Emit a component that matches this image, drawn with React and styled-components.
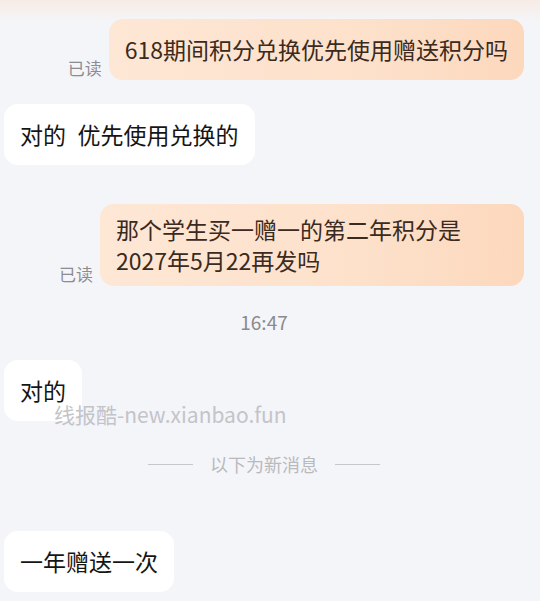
import React from "react";
import styled, { createGlobalStyle } from "styled-components";

const GlobalStyle = createGlobalStyle`
  html, body {
    margin: 0;
    padding: 0;
    background: #f4f5f9;
  }
  body {
    font-family: "Noto Sans CJK SC", "Noto Sans", sans-serif;
  }
`;

const messages = [
  { id: 1, mine: true, read: true, gap: 0, text: "618期间积分兑换优先使用赠送积分吗" },
  { id: 2, mine: false, gap: 24, text: "对的\u2002优先使用兑换的" },
  { id: 3, mine: true, read: true, gap: 39, text: "那个学生买一赠一的第二年积分是2027年5月22再发吗" },
  { id: 4, time: "16:47", gap: 24 },
  { id: 5, mine: false, gap: 26, text: "对的" },
  { id: 6, divider: "以下为新消息", gap: 31 },
  { id: 7, mine: false, gap: 55, text: "一年赠送一次" },
];

const App = () => {
  return (
    <Page>
      <GlobalStyle />
      {messages.map((m) => {
        if (m.time) {
          return (
            <Time key={m.id} $gap={m.gap}>
              {m.time}
            </Time>
          );
        }
        if (m.divider) {
          return (
            <Divider key={m.id} $gap={m.gap}>
              <Line />
              <span>{m.divider}</span>
              <Line />
            </Divider>
          );
        }
        return (
          <Row key={m.id} $mine={m.mine} $gap={m.gap}>
            {m.read && <ReadMark>已读</ReadMark>}
            <Bubble $mine={m.mine}>{m.text}</Bubble>
          </Row>
        );
      })}
      <Watermark>线报酷-new.xianbao.fun</Watermark>
    </Page>
  );
};

export default App;

const Page = styled.div`
  position: relative;
  width: 540px;
  height: 601px;
  overflow: hidden;
  box-sizing: border-box;
  padding: 19px 16px 0 4px;
  display: flex;
  flex-direction: column;
  background: linear-gradient(
    180deg,
    rgba(250, 228, 212, 0.55) 0px,
    rgba(244, 245, 249, 0) 22px
  );
`;

const Row = styled.div`
  display: flex;
  align-items: flex-end;
  justify-content: ${(props) => (props.$mine ? "flex-end" : "flex-start")};
  gap: 7px;
  margin-top: ${(props) => props.$gap}px;
`;

const ReadMark = styled.span`
  font-size: 17px;
  line-height: 24px;
  color: #8d8d91;
  margin-bottom: 0;
  flex-shrink: 0;
`;

const Bubble = styled.div`
  box-sizing: border-box;
  max-width: 424px;
  min-height: 61px;
  padding: 10px 16px;
  display: flex;
  align-items: center;
  border-radius: 14px;
  font-size: 23px;
  line-height: 31px;
  color: ${(props) => (props.$mine ? "#3a2a20" : "#151515")};
  background: ${(props) =>
    props.$mine
      ? "linear-gradient(90deg, #fde7d5 0%, #fde1cb 60%, #fcd8bd 100%)"
      : "#ffffff"};
`;

const Time = styled.div`
  margin-top: ${(props) => props.$gap}px;
  text-align: center;
  font-size: 19px;
  line-height: 24px;
  color: #8a8a8f;
`;

const Divider = styled.div`
  margin-top: ${(props) => props.$gap}px;
  display: flex;
  align-items: center;
  justify-content: center;
  gap: 17px;
  font-size: 18px;
  line-height: 24px;
  color: #b9babe;
`;

const Line = styled.span`
  width: 45px;
  height: 1px;
  background: #c6c7cb;
`;

const Watermark = styled.div`
  position: absolute;
  left: 54px;
  top: 402px;
  font-size: 21px;
  line-height: 24px;
  color: #c3c4c9;
  pointer-events: none;
`;
